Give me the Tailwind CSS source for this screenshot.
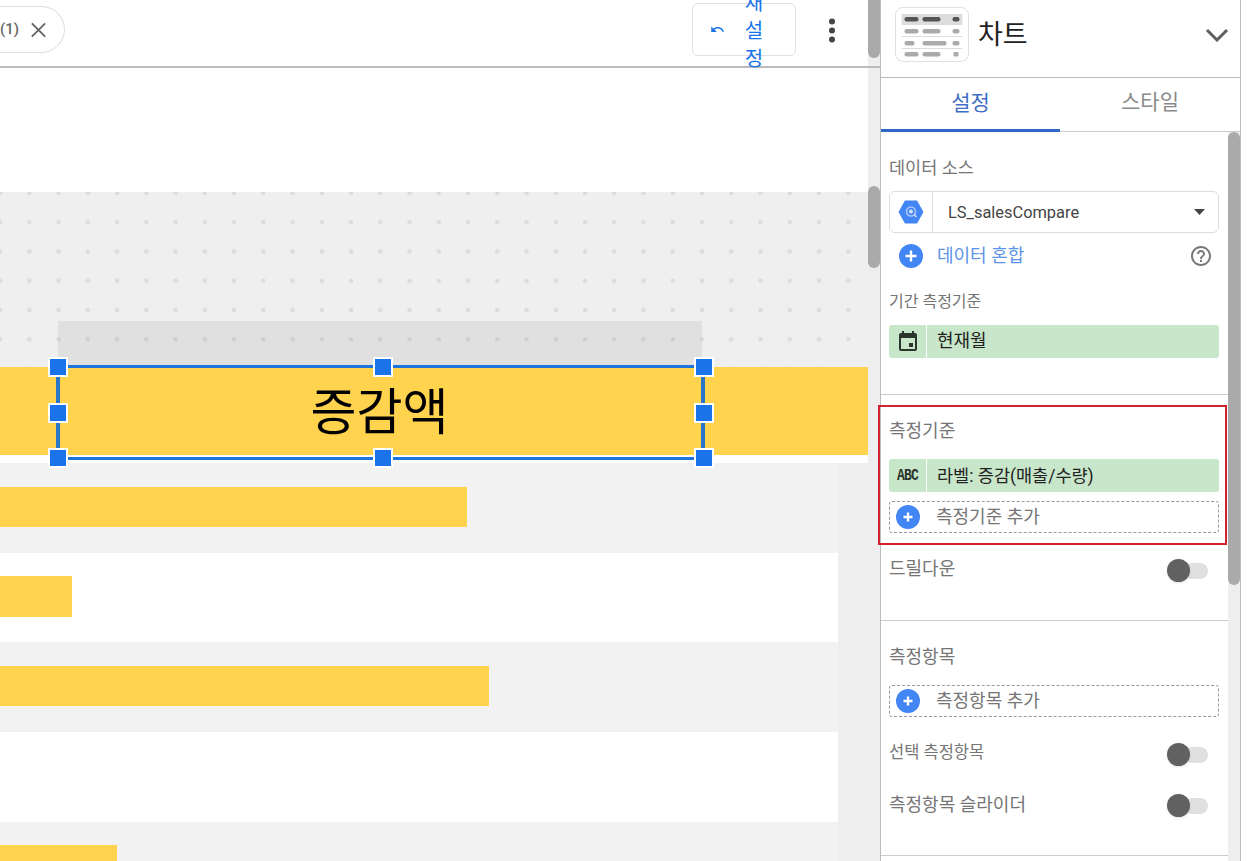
<!DOCTYPE html>
<html lang="ko">

<head>
  <meta charset="UTF-8" />
  <meta name="viewport" content="width=device-width, initial-scale=1" />
  <title>차트 설정</title>
  <script src="https://cdn.jsdelivr.net/npm/@tailwindcss/browser@4"></script>
</head>

<body class="bg-white">
  <div class="relative flex h-[861px] w-[1247px] overflow-hidden bg-white font-['Roboto','Noto_Sans_CJK_KR',sans-serif]">

    <!-- report canvas -->
    <div class="w-[880px] shrink-0">
      <header class="flex h-[68px] border-b-2 border-[#bbbbbb]">
        <div class="relative h-[66px] w-[868px]">
          <div class="absolute left-0 top-[6px] flex h-[47px] w-[65px] items-center justify-end gap-[10px] rounded-r-full border border-l-0 border-[#dddddd] pr-[16px]">
            <span class="text-[15px] font-medium text-[#666666]">(1)</span>
            <svg class="h-[20px] w-[20px]" viewBox="0 0 20 20" fill="none" stroke="#666666" stroke-width="2"><path d="M3 3l14 14M17 3L3 17" /></svg>
          </div>
          <button class="absolute left-[692px] top-[3px] flex h-[53px] w-[104px] items-center rounded-md border border-[#e0e0e0] pl-[17px]">
            <svg class="h-[15px] w-[15px]" viewBox="0 0 24 24" fill="#1a73e8"><path d="M12.5 8c-2.65 0-5.05.99-6.9 2.6L2 7v9h9l-3.62-3.62c1.39-1.16 3.16-1.88 5.12-1.88 3.54 0 6.55 2.31 7.6 5.5l2.37-.78C21.08 11.03 17.15 8 12.5 8z" /></svg>
            <span class="ml-[19px] mt-[2px] w-[20px] text-center text-[20px] leading-[28px] text-[#1a73e8]">재 설 정</span>
          </button>
          <svg class="absolute left-[828px] top-[18px] h-[25px] w-[8px]" viewBox="0 0 8 25" fill="#444444">
            <circle cx="4" cy="3.5" r="3" /><circle cx="4" cy="12.5" r="3" /><circle cx="4" cy="21.5" r="3" />
          </svg>
        </div>
        <div class="relative z-10 h-[66px] w-[12px] bg-[#eeeeee]">
          <div class="h-[58px] rounded-b-[6px] bg-[#aaaaaa]"></div>
        </div>
      </header>

      <div class="flex h-[793px]">
        <div class="w-[868px]">
          <div class="h-[124px] bg-white"></div>
          <div class="h-[175px] bg-[#efefef] bg-[radial-gradient(circle,#dcdcdc_2px,transparent_2.6px)] bg-[size:29.25px_29.25px] bg-[position:-14.6px_-13.6px] pl-[58px] pt-[129px]">
            <div class="h-[46px] w-[644px] bg-black/[0.06]"></div>
          </div>
          <div class="h-[88px] bg-[#ffd34e]"></div>
          <div class="h-[8px] bg-white"></div>
          <div class="bg-[#eeeeee]">
            <div class="flex h-[90px] w-[838px] items-center bg-[#f2f2f2] pb-[2px]"><div class="h-[40px] w-[467px] bg-[#ffd34e]"></div></div>
            <div class="flex h-[89px] w-[838px] items-center bg-white pb-[2px]"><div class="h-[41px] w-[72px] bg-[#ffd34e]"></div></div>
            <div class="flex h-[90px] w-[838px] items-center bg-[#f2f2f2] pb-[2px]"><div class="h-[40px] w-[489px] bg-[#ffd34e]"></div></div>
            <div class="h-[90px] w-[838px] bg-white"></div>
            <div class="h-[39px] w-[838px] bg-[#f2f2f2] pt-[23px]"><div class="h-[16px] w-[117px] bg-[#ffd34e]"></div></div>
          </div>
        </div>
        <div class="w-[12px] bg-[#eeeeee] pt-[118px]">
          <div class="h-[82px] rounded-[6px] bg-[#aaaaaa]"></div>
        </div>
      </div>
    </div>

    <!-- properties panel -->
    <aside class="flex h-[861px] w-[361px] shrink-0 flex-col border-x border-[#bbbbbb]">
      <div class="flex h-[78px] shrink-0 items-start border-b border-[#bbbbbb] pl-[14px] pt-[7px]">
        <div class="h-[55px] w-[74px] rounded-lg border border-[#e0e0e0]">
          <svg width="72" height="53" viewBox="0 0 71 53">
            <rect x="5" y="6" width="61" height="11" fill="#dddddd" />
            <g fill="#555555">
              <rect x="8" y="9" width="14" height="4.5" rx="2" /><rect x="26" y="9" width="18" height="4.5" rx="2" /><rect x="56" y="9" width="7" height="4.5" rx="2" />
            </g>
            <g fill="#aaaaaa">
              <rect x="8" y="21" width="14" height="4.5" rx="2" /><rect x="26" y="21" width="18" height="4.5" rx="2" /><rect x="56" y="21" width="7" height="4.5" rx="2" />
              <rect x="8" y="33" width="10" height="4.5" rx="2" /><rect x="26" y="33" width="24" height="4.5" rx="2" /><rect x="56" y="33" width="7" height="4.5" rx="2" />
              <rect x="8" y="44" width="14" height="4.5" rx="2" /><rect x="26" y="44" width="18" height="4.5" rx="2" /><rect x="57" y="44" width="5" height="4.5" rx="1" />
            </g>
            <g fill="#dddddd">
              <rect x="5" y="28" width="61" height="1" /><rect x="5" y="40" width="61" height="1" />
            </g>
          </svg>
        </div>
        <span class="ml-[9px] mt-[10px] text-[27px] leading-[36px] text-[#222222]">차트</span>
        <svg class="ml-auto mr-[11px] mt-[21px] h-[14px] w-[24px]" viewBox="0 0 24 14" fill="none" stroke="#5f5f5f" stroke-width="3"><path d="M2 2l10 10L22 2" /></svg>
      </div>

      <div class="flex h-[54px] shrink-0 text-[21px]">
        <div class="flex w-[179px] items-center justify-center border-b-[3px] border-[#2f67c7] text-[#3f6fc4]">설정</div>
        <div class="flex w-[180px] items-center justify-center border-b border-[#cccccc] pb-[4px] text-[#8a8a8a]">스타일</div>
      </div>

      <div class="flex min-h-0 flex-1">
        <div class="w-[347px] text-[16px] leading-[24px] text-[#757575]">

          <section class="h-[263px] border-b border-[#cccccc] px-[8px] pt-[24px]">
            <div class="text-[17.5px]">데이터 소스</div>
            <div class="mt-[11px] flex h-[42px] w-[330px] items-center rounded-md border border-[#dddddd]">
              <div class="flex h-full w-[43px] items-center justify-center border-r border-[#dddddd]">
                <svg class="h-[26px] w-[26px]" viewBox="0 0 26 26">
                  <path d="M7 1.5h12L25.5 13 19 24.5H7L.5 13z" fill="#4285f4" />
                  <circle cx="13" cy="12.5" r="4.5" fill="none" stroke="#a9c7fa" stroke-width="1.6" />
                  <circle cx="13" cy="12.5" r="2" fill="#d2e3fc" />
                  <path d="M16 15.5l2.5 2.5" stroke="#d2e3fc" stroke-width="1.6" />
                </svg>
              </div>
              <span class="ml-[15px] mt-[2px] text-[16.4px] text-[#444444]">LS_salesCompare</span>
              <svg class="ml-auto mr-[13px] h-[6px] w-[11px]" viewBox="0 0 11 6" fill="#444444"><path d="M0 0h11L5.500 6z" /></svg>
            </div>
            <div class="mt-[11px] flex h-[24px] items-center">
              <svg class="ml-[10px] h-[24px] w-[24px]" viewBox="0 0 24 24">
                <circle cx="12" cy="12" r="12" fill="#4285f4" />
                <path d="M12 6.500v11M6.500 12h11" stroke="#ffffff" stroke-width="2.400" />
              </svg>
              <span class="ml-[14px] text-[18px] text-[#5c94e8]">데이터 혼합</span>
              <svg class="ml-auto mr-[7px] h-[24px] w-[24px]" viewBox="0 0 24 24" fill="#777777"><path d="M11 18h2v-2h-2v2zm1-16C6.480 2 2 6.480 2 12s4.480 10 10 10 10-4.480 10-10S17.520 2 12 2zm0 18c-4.410 0-8-3.590-8-8s3.590-8 8-8 8 3.590 8 8-3.590 8-8 8zm0-14c-2.210 0-4 1.790-4 4h2c0-1.100.9-2 2-2s2 .9 2 2c0 2-3 1.750-3 5h2c0-2.250 3-2.500 3-5 0-2.210-1.790-4-4-4z" /></svg>
            </div>
            <div class="mt-[22px]">기간 측정기준</div>
            <div class="mt-[11px] flex h-[33px] w-[330px] items-center rounded-[3px] bg-[#c8e6c9] text-[18px] text-[#222222]">
              <div class="flex h-full w-[38px] items-center justify-center border-r border-white">
                <svg class="h-[24px] w-[24px]" viewBox="0 0 24 24" fill="#2b352c"><path d="M19 3h-1V1h-2v2H8V1H6v2H5c-1.110 0-1.990.9-1.990 2L3 19c0 1.100.89 2 2 2h14c1.100 0 2-.9 2-2V5c0-1.100-.9-2-2-2zm0 16H5V8h14v11zM13 13h4v4h-4z" /></svg>
              </div>
              <span class="mb-[2px] ml-[10px]">현재월</span>
            </div>
          </section>

          <section class="h-[226px] border-b border-[#cccccc] px-[8px] pt-[24px]">
            <div class="text-[18px]">측정기준</div>
            <div class="mt-[16px] flex h-[33px] w-[330px] items-center rounded-[3px] bg-[#c8e6c9] text-[17.5px] text-[#222222]">
              <div class="flex h-full w-[38px] items-center justify-center border-r border-white font-['Liberation_Mono',monospace] text-[13px] font-bold tracking-[-0.8px] text-[#2b352c]"><span class="scale-y-125">ABC</span></div>
              <span class="ml-[10px]">라벨: 증감(매출/수량)</span>
            </div>
            <div class="mt-[9px] flex h-[32px] w-[330px] items-center rounded-[3px] border border-dashed border-[#999999]">
              <svg class="ml-[6px] h-[24px] w-[24px]" viewBox="0 0 24 24">
                <circle cx="12" cy="12" r="12" fill="#4285f4" />
                <path d="M12 7.500v9M7.500 12h9" stroke="#ffffff" stroke-width="2.400" />
              </svg>
              <span class="ml-[16px] text-[18px]">측정기준 추가</span>
            </div>
            <div class="mt-[24px] flex h-[24px] items-center">
              <span class="text-[18px]">드릴다운</span>
              <div class="relative ml-auto mr-[12px] mt-[4px] h-[24px] w-[41px]">
                <div class="absolute left-[17px] top-[4px] h-[16px] w-[24px] rounded-full bg-[#e0e0e0]"></div>
                <div class="absolute left-0 top-0 h-[23px] w-[23px] rounded-full bg-[#616161] shadow-sm"></div>
              </div>
            </div>
          </section>

          <section class="h-[235px] border-b border-[#cccccc] px-[8px] pt-[24px]">
            <div class="text-[18px]">측정항목</div>
            <div class="mt-[16px] flex h-[32px] w-[330px] items-center rounded-[3px] border border-dashed border-[#999999]">
              <svg class="ml-[6px] h-[24px] w-[24px]" viewBox="0 0 24 24">
                <circle cx="12" cy="12" r="12" fill="#4285f4" />
                <path d="M12 7.500v9M7.500 12h9" stroke="#ffffff" stroke-width="2.400" />
              </svg>
              <span class="ml-[16px] text-[18px]">측정항목 추가</span>
            </div>
            <div class="mt-[24px] flex h-[24px] items-center">
              <span class="text-[16.5px]">선택 측정항목</span>
              <div class="relative ml-auto mr-[12px] mt-[4px] h-[24px] w-[41px]">
                <div class="absolute left-[17px] top-[4px] h-[16px] w-[24px] rounded-full bg-[#e0e0e0]"></div>
                <div class="absolute left-0 top-0 h-[23px] w-[23px] rounded-full bg-[#616161] shadow-sm"></div>
              </div>
            </div>
            <div class="mt-[28px] flex h-[24px] items-center">
              <span class="text-[18px]">측정항목 슬라이더</span>
              <div class="relative ml-auto mr-[12px] mt-[2px] h-[24px] w-[41px]">
                <div class="absolute left-[17px] top-[4px] h-[16px] w-[24px] rounded-full bg-[#e0e0e0]"></div>
                <div class="absolute left-0 top-0 h-[23px] w-[23px] rounded-full bg-[#616161] shadow-sm"></div>
              </div>
            </div>
          </section>
        </div>
        <div class="w-[12px] bg-[#eeeeee]">
          <div class="h-[453px] rounded-[6px] bg-[#aaaaaa]"></div>
        </div>
      </div>
    </aside>

    <!-- annotation around the dimension block -->
    <div class="absolute left-[878px] top-[405px] h-[140px] w-[349px] border-2 border-[#d3222f]"></div>

    <!-- selected component on the canvas -->
    <div class="absolute left-[56px] top-[365px] flex h-[95px] w-[649px] items-center justify-center border-x-4 border-y-[3px] border-x-[#2a75c8] border-y-[#1f74dc] pr-[2px] text-[50px] leading-none text-black">증감액</div>
    <div class="absolute left-[48px] top-[357px] h-[20px] w-[20px] border-2 border-white bg-[#1a73e8]"></div>
    <div class="absolute left-[373px] top-[357px] h-[20px] w-[20px] border-2 border-white bg-[#1a73e8]"></div>
    <div class="absolute left-[694px] top-[357px] h-[20px] w-[20px] border-2 border-white bg-[#1a73e8]"></div>
    <div class="absolute left-[48px] top-[403px] h-[20px] w-[20px] border-2 border-white bg-[#1a73e8]"></div>
    <div class="absolute left-[694px] top-[403px] h-[20px] w-[20px] border-2 border-white bg-[#1a73e8]"></div>
    <div class="absolute left-[48px] top-[448px] h-[20px] w-[20px] border-2 border-white bg-[#1a73e8]"></div>
    <div class="absolute left-[373px] top-[448px] h-[20px] w-[20px] border-2 border-white bg-[#1a73e8]"></div>
    <div class="absolute left-[694px] top-[448px] h-[20px] w-[20px] border-2 border-white bg-[#1a73e8]"></div>
  </div>
</body>

</html>
